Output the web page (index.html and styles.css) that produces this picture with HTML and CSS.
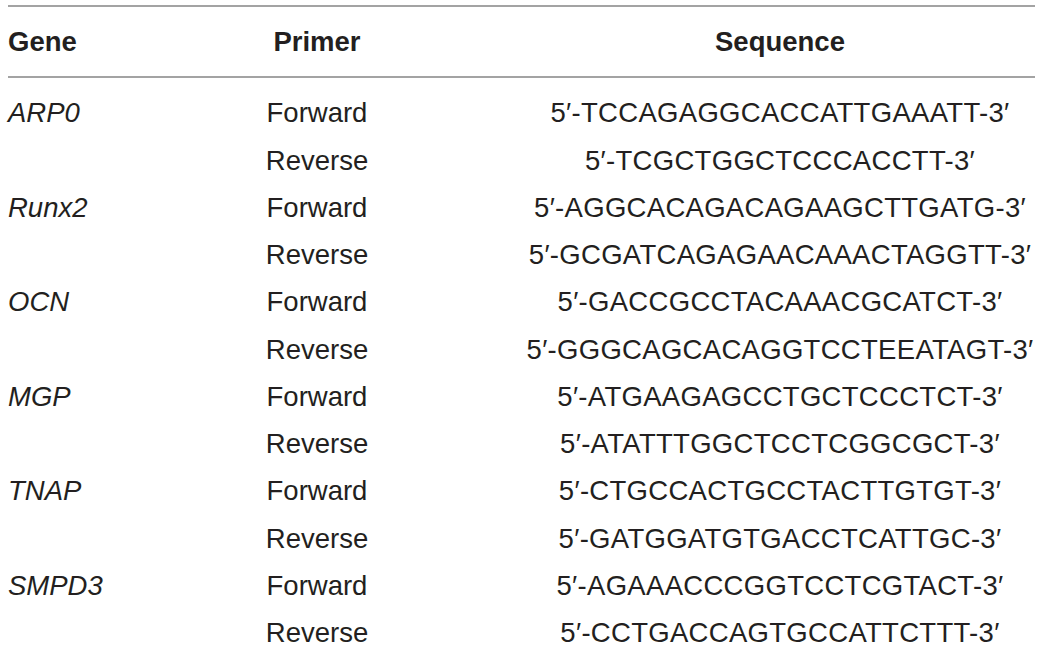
FILE: index.html
```html
<!DOCTYPE html>
<html>
<head>
<meta charset="utf-8">
<link rel="stylesheet" href="styles.css">
</head>
<body>
<div class="table">
  <div class="head row">
    <div class="gene">Gene</div>
    <div class="primer">Primer</div>
    <div class="seq">Sequence</div>
  </div>
  <div class="body">
    <div class="row"><div class="gene"><i>ARP0</i></div><div class="primer">Forward</div><div class="seq">5′-TCCAGAGGCACCATTGAAATT-3′</div></div>
    <div class="row"><div class="gene"></div><div class="primer">Reverse</div><div class="seq">5′-TCGCTGGCTCCCACCTT-3′</div></div>
    <div class="row"><div class="gene"><i>Runx2</i></div><div class="primer">Forward</div><div class="seq">5′-AGGCACAGACAGAAGCTTGATG-3′</div></div>
    <div class="row"><div class="gene"></div><div class="primer">Reverse</div><div class="seq">5′-GCGATCAGAGAACAAACTAGGTT-3′</div></div>
    <div class="row"><div class="gene"><i>OCN</i></div><div class="primer">Forward</div><div class="seq">5′-GACCGCCTACAAACGCATCT-3′</div></div>
    <div class="row"><div class="gene"></div><div class="primer">Reverse</div><div class="seq">5′-GGGCAGCACAGGTCCTEEATAGT-3′</div></div>
    <div class="row"><div class="gene"><i>MGP</i></div><div class="primer">Forward</div><div class="seq">5′-ATGAAGAGCCTGCTCCCTCT-3′</div></div>
    <div class="row"><div class="gene"></div><div class="primer">Reverse</div><div class="seq">5′-ATATTTGGCTCCTCGGCGCT-3′</div></div>
    <div class="row"><div class="gene"><i>TNAP</i></div><div class="primer">Forward</div><div class="seq">5′-CTGCCACTGCCTACTTGTGT-3′</div></div>
    <div class="row"><div class="gene"></div><div class="primer">Reverse</div><div class="seq">5′-GATGGATGTGACCTCATTGC-3′</div></div>
    <div class="row"><div class="gene"><i>SMPD3</i></div><div class="primer">Forward</div><div class="seq">5′-AGAAACCCGGTCCTCGTACT-3′</div></div>
    <div class="row"><div class="gene"></div><div class="primer">Reverse</div><div class="seq">5′-CCTGACCAGTGCCATTCTTT-3′</div></div>
  </div>
</div>
</body>
</html>
```
FILE: styles.css
```css
html, body {
  margin: 0;
  padding: 0;
  background: #ffffff;
}
body {
  font-family: "Liberation Sans", Arial, sans-serif;
  color: #231f20;
  font-size: 27.5px;
}
.table {
  margin: 5px 0 0 8px;
  width: 1027px;
  border-top: 2px solid #a3a3a3;
}
.row {
  display: grid;
  grid-template-columns: 101px 416px 510px;
  line-height: 47.27px;
  height: 47.27px;
}
.head {
  font-weight: bold;
  padding: 11px 0 11px;
  border-bottom: 2px solid #a3a3a3;
}
.head .seq {
  letter-spacing: 0;
}
.body {
  padding-top: 11px;
}
.gene {
  text-align: left;
  white-space: nowrap;
}
.primer {
  text-align: center;
}
.seq {
  text-align: center;
  white-space: nowrap;
  letter-spacing: 0.3px;
}
```
